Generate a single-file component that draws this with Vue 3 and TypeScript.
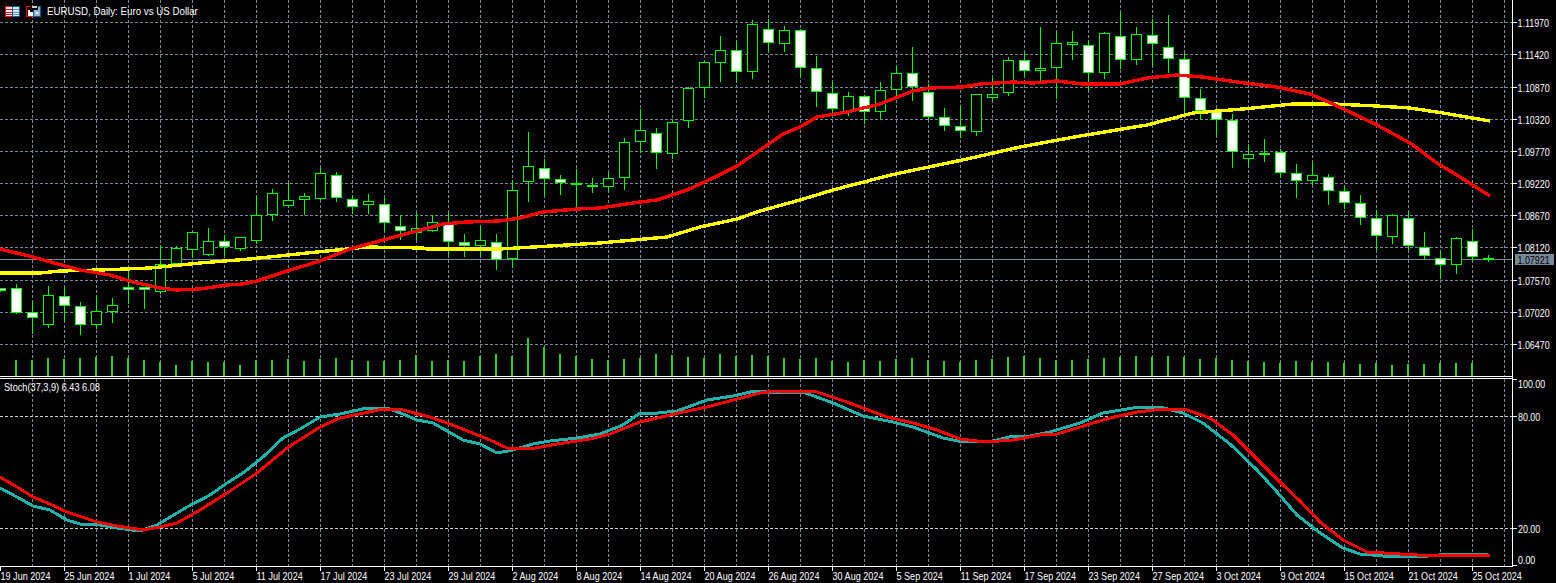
<script setup lang="ts">
type Pt = [number, number];
// high, body top, body bottom, low, bearish (white body)
const raw: [number, number, number, number, number][] = [
  [288,288,291,291,1],[284,288,313,313,1],[301,312,318,333,1],[286,295,325,327,0],[287,296,306,320,1],[302,306,325,334,1],
  [296,311,325,328,0],[298,305,312,322,0],[269,287,290,303,1],[287,287,290,308,1],[245,264,292,293,0],[246,248,264,264,0],
  [232,232,250,257,0],[228,241,255,255,0],[235,241,247,255,1],[237,237,249,250,0],[196,215,241,243,0],[189,193,215,220,0],
  [183,200,206,207,0],[193,196,200,214,0],[168,173,199,199,0],[172,175,198,201,1],[195,199,207,213,1],[194,201,205,213,0],
  [198,204,223,231,1],[215,226,231,239,1],[213,228,233,239,0],[215,222,231,231,0],[213,224,242,254,1],[234,242,246,256,1],
  [226,240,246,255,0],[234,242,260,269,1],[180,190,259,267,0],[132,166,182,201,0],[159,168,179,195,1],[175,179,183,194,1],
  [169,183,185,207,1],[178,185,187,192,1],[173,178,187,191,0],[138,142,178,189,0],[109,130,142,152,0],[128,133,153,168,1],
  [119,122,154,158,0],[87,88,121,127,0],[61,62,88,97,0],[36,50,63,81,0],[41,50,72,81,1],[20,24,72,78,0],
  [19,29,43,51,1],[26,30,44,51,0],[29,30,68,77,1],[56,68,92,106,1],[82,93,109,112,1],[92,96,112,115,0],
  [95,96,112,123,1],[82,90,112,118,0],[66,73,90,95,0],[47,73,87,100,1],[84,92,117,119,1],[108,117,126,130,1],
  [105,126,131,137,1],[94,94,132,135,0],[78,94,98,100,0],[57,60,93,95,0],[52,60,71,75,1],[27,68,71,82,0],
  [32,43,68,98,0],[31,42,45,59,0],[40,45,73,90,1],[32,33,73,78,0],[12,36,60,68,1],[27,34,60,64,0],
  [19,35,44,65,1],[15,47,59,72,1],[53,59,98,112,1],[89,98,111,119,1],[108,111,120,134,1],[114,120,152,167,1],
  [144,154,159,165,0],[139,153,154,161,0],[149,152,173,177,1],[164,173,181,197,1],[163,175,181,184,0],[174,177,191,204,1],
  [186,191,203,208,1],[195,203,218,224,1],[210,218,236,249,1],[214,215,237,243,0],[211,218,246,249,1],[232,247,256,259,1],
  [250,258,265,278,1],[237,238,265,273,0],[229,241,257,260,1],[255,258,259,261,0],
];
const candles = raw.map((c, i) => {
  const top = c[1] + 0.5;
  return { x: i * 16 + 0.5, hi: c[0], top, h: Math.max(1, c[2] - 0.5 - top), lo: c[3], white: c[4] === 1 };
});

const volTops = [
  0,360,360,358,359,358,357,356,358,360,362,365,361,362,362,365,360,360,359,361,359,358,360,361,
  361,360,355,361,360,361,356,354,356,338,347,354,356,359,360,359,358,354,355,357,358,354,356,355,
  356,358,359,358,361,362,360,361,359,358,360,361,362,360,359,357,356,358,360,360,359,358,357,356,
  357,356,357,359,358,360,361,362,363,361,362,362,363,364,363,365,364,364,363,363,363,0,
];
const volumes = volTops.map((t, i) => ({ x: i * 16 - 1, y: t })).filter((v) => v.y > 0);

const toPts = (a: Pt[]) => a.map((p) => p.join(",")).join(" ");

const maRed = toPts([[0,249],[33,257],[47,261],[80,270],[110,275],[133,282],[160,288],[177,290],[200,289],[227,285],[243,284],[257,281],[287,271],[320,261],[350,249],[383,240],[413,232],[443,224],[467,222],[500,221],[520,218],[543,212],[577,209],[600,208],[640,202],[657,200],[687,190],[713,178],[737,166],[763,148],[783,134],[800,127],[817,117],[847,112],[880,104],[913,91],[930,88],[963,87],[980,84],[1013,82],[1033,83],[1057,81],[1083,84],[1120,84],[1147,78],[1177,75],[1203,77],[1237,82],[1277,87],[1310,94],[1333,104],[1377,125],[1410,143],[1437,163],[1460,177],[1490,196]]);
const maYellow = toPts([[0,273],[40,273],[60,271],[100,270],[150,268],[200,263],[250,259],[317,252],[367,247],[423,248],[427,249],[483,249],[500,249],[550,246],[600,243],[667,237],[700,227],[737,219],[760,211],[800,200],[833,190],[883,177],[900,173],[967,159],[1020,147],[1080,136],[1147,125],[1193,113],[1243,109],[1293,104],[1333,104],[1377,106],[1410,108],[1443,113],[1490,121]]);
const stTeal = toPts([[0,488],[17,497],[33,506],[50,510],[67,520],[80,524],[100,525],[117,528],[140,531],[157,525],[187,507],[210,495],[227,483],[243,473],[263,457],[283,438],[300,429],[320,417],[340,414],[367,408],[387,408],[403,414],[417,420],[433,423],[463,440],[480,444],[497,453],[513,450],[533,444],[550,441],[577,438],[600,434],[623,425],[640,413],[648,414],[677,411],[707,400],[733,396],[755,391],[767,392],[803,392],[833,403],[863,416],[893,422],[913,427],[943,438],[963,442],[993,441],[1013,436],[1030,436],[1050,432],[1080,423],[1103,413],[1133,408],[1160,407],[1183,413],[1203,423],[1230,444],[1257,470],[1277,492],[1297,515],[1320,533],[1343,548],[1360,554],[1383,556],[1417,557],[1450,554],[1488,554]]);
const stRed = toPts([[0,477],[17,487],[33,497],[50,504],[67,512],[97,522],[117,526],[143,530],[160,527],[177,523],[200,510],[227,493],[257,473],[287,448],[320,427],[340,418],[383,409],[403,410],[430,417],[450,424],[490,440],[507,448],[530,449],[557,444],[590,439],[610,434],[640,422],[683,412],[707,407],[737,399],[760,393],[777,391],[817,392],[847,402],[887,417],[913,423],[937,430],[960,439],[985,442],[1013,440],[1040,435],[1057,434],[1090,424],[1110,418],[1137,412],[1163,409],[1187,410],[1210,418],[1233,435],[1263,465],[1283,485],[1300,501],[1320,522],[1343,540],[1367,552],[1400,554],[1433,556],[1467,555],[1490,555]]);

const vGrid = Array.from({ length: 47 }, (_, i) => (i + 1) * 32 + 0.5);
const prices: [string, number][] = [
  ["1.11970",22],["1.11420",54],["1.10870",87],["1.10320",119],["1.09770",151],["1.09220",183],
  ["1.08670",215],["1.08120",247],["1.07570",280],["1.07020",312],["1.06470",344],
];
const dates = ["19 Jun 2024","25 Jun 2024","1 Jul 2024","5 Jul 2024","11 Jul 2024","17 Jul 2024","23 Jul 2024","29 Jul 2024","2 Aug 2024","8 Aug 2024","14 Aug 2024","20 Aug 2024","26 Aug 2024","30 Aug 2024","5 Sep 2024","11 Sep 2024","17 Sep 2024","23 Sep 2024","27 Sep 2024","3 Oct 2024","9 Oct 2024","15 Oct 2024","21 Oct 2024","25 Oct 2024"];
const squeeze = (x: number, y: number, k = 0.81) => `translate(${x} ${y}) scale(${k} 1)`;
</script>

<template>
  <div class="terminal">
    <section class="row main-row">
      <svg class="plot" width="1512" height="376" viewBox="0 0 1512 376">
        <g class="grid">
          <line v-for="y in prices" :key="y[0]" x1="0" x2="1512" :y1="y[1] + 0.5" :y2="y[1] + 0.5" />
          <line v-for="x in vGrid" :key="x" :x1="x" :x2="x" y1="0" y2="376" />
        </g>
        <line class="last" x1="0" x2="1512" y1="259.5" y2="259.5" />
        <rect v-for="v in volumes" :key="v.x" class="vol" :x="v.x" :y="v.y" width="2" :height="376 - v.y" />
        <g v-for="c in candles" :key="c.x" class="candle">
          <line :x1="c.x" :x2="c.x" :y1="c.hi" :y2="c.lo + 1" />
          <rect :class="{ white: c.white }" :x="c.x - 5" :y="c.top" width="10" :height="c.h" />
        </g>
        <polyline class="line yellow" :points="maYellow" />
        <polyline class="line red" :points="maRed" />
        <g class="icons">
          <rect x="5.5" y="6.5" width="7" height="10" fill="#fff" stroke="#f00" />
          <rect x="12.5" y="6.5" width="7" height="10" fill="#dfe6ec" stroke="#0d5c9e" />
          <path d="M6 9.5h6M6 12.5h6M6 14.5h6" stroke="#f00" />
          <path d="M13 9.5h6M13 12.5h6M13 14.5h6" stroke="#6f8fa8" />
          <rect x="26.5" y="6.5" width="7" height="10" fill="#000" stroke="#f00" />
          <rect x="33.5" y="6.5" width="7" height="10" fill="#8fb2cc" stroke="#0d5c9e" />
          <rect x="28" y="10" width="2" height="6" fill="#fff" />
          <rect x="30" y="12" width="3" height="4" fill="#fff" />
          <rect x="31" y="6" width="7" height="4" fill="#000" />
          <rect x="32" y="6" width="5" height="2" fill="#c8d0d6" />
          <rect x="36" y="12" width="2" height="2" fill="#fff" />
        </g>
        <text class="label" :transform="squeeze(47, 15, 0.886)" xml:space="preserve">EURUSD, Daily:  Euro vs US Dollar</text>
      </svg>
      <svg class="axis" width="44" height="376" viewBox="1512 0 44 376">
        <g v-for="p in prices" :key="p[0]">
          <line class="tick" x1="1513" x2="1517" :y1="p[1] + 0.5" :y2="p[1] + 0.5" />
          <text class="label" :transform="squeeze(1517.5, p[1] + 4.5)">{{ p[0] }}</text>
        </g>
        <rect class="tag" x="1515" y="254" width="39" height="11" />
        <text class="label dark" :transform="squeeze(1517.5, 264)">1.07921</text>
      </svg>
    </section>

    <section class="row sep-row">
      <div class="sep"></div>
      <div class="sep-axis"></div>
    </section>

    <section class="row osc-row">
      <svg class="plot" width="1512" height="187" viewBox="0 379 1512 187">
        <g class="grid">
          <line v-for="x in vGrid" :key="x" :x1="x" :x2="x" y1="379" y2="566" />
        </g>
        <g class="grid level">
          <line x1="0" x2="1512" y1="416.5" y2="416.5" />
          <line x1="0" x2="1512" y1="528.5" y2="528.5" />
        </g>
        <polyline class="line teal" :points="stTeal" />
        <polyline class="line red thin" :points="stRed" />
        <text class="label" :transform="squeeze(4, 391, 0.835)">Stoch(37,3,9) 6.43 6.08</text>
      </svg>
      <svg class="axis open" width="44" height="187" viewBox="1512 379 44 187">
        <line class="tick" x1="1513" x2="1517" y1="379.5" y2="379.5" />
        <line class="tick" x1="1513" x2="1517" y1="416.5" y2="416.5" />
        <line class="tick" x1="1513" x2="1517" y1="528.5" y2="528.5" />
        <line class="tick" x1="1513" x2="1517" y1="565.5" y2="565.5" />
        <text class="label" :transform="squeeze(1518, 387.5)">100.00</text>
        <text class="label" :transform="squeeze(1518, 420.5)">80.00</text>
        <text class="label" :transform="squeeze(1518, 532.5)">20.00</text>
        <text class="label" :transform="squeeze(1518, 564)">0.00</text>
      </svg>
    </section>

    <svg class="time" width="1556" height="17" viewBox="0 566 1556 17">
      <line class="tick" x1="0" x2="1513" y1="566.5" y2="566.5" />
      <g v-for="(d, i) in dates" :key="d">
        <line class="tick" :x1="i * 64 + 0.5" :x2="i * 64 + 0.5" y1="567" y2="571" />
        <text class="label" :transform="squeeze(i * 64 + 0.5, 580, 0.825)">{{ d }}</text>
      </g>
    </svg>
  </div>
</template>

<style scoped>
.terminal {
  width: 1556px;
  height: 583px;
  background: #000;
  display: flex;
  flex-direction: column;
  overflow: hidden;
}
.row {
  display: flex;
  flex: none;
}
svg {
  display: block;
  flex: none;
}
.plot {
  background: #000;
}
.axis {
  box-shadow: inset 1px 0 0 #fff;
}
.axis.open {
  overflow: visible;
}
.sep-row {
  height: 3px;
}
.sep {
  width: 1512px;
  border-top: 1px solid #fff;
  border-bottom: 1px solid #fff;
  box-sizing: border-box;
}
.sep-axis {
  width: 44px;
  box-shadow: inset 1px 0 0 #fff;
}
.grid line {
  stroke: #778899;
  stroke-width: 1;
  stroke-dasharray: 3 2;
  shape-rendering: crispEdges;
}
.grid.level line {
  stroke: #c4ccd4;
}
.last {
  stroke: #778899;
  stroke-width: 1;
  shape-rendering: crispEdges;
}
.vol {
  fill: #32cd32;
  shape-rendering: crispEdges;
}
.candle line {
  stroke: #0f0;
  stroke-width: 1;
  shape-rendering: crispEdges;
}
.candle rect {
  fill: #000;
  stroke: #0f0;
  stroke-width: 1;
  shape-rendering: crispEdges;
}
.candle rect.white {
  fill: #fff;
}
.line {
  fill: none;
  stroke-width: 3.4;
  stroke-linejoin: round;
  shape-rendering: crispEdges;
}
.line.thin {
  stroke-width: 3;
}
.yellow {
  stroke: #ff0;
}
.red {
  stroke: #f00;
}
.teal {
  stroke: #20b2aa;
  stroke-width: 3;
}
.icons * {
  shape-rendering: crispEdges;
}
.tick {
  stroke: #fff;
  stroke-width: 1;
  shape-rendering: crispEdges;
}
.tag {
  fill: #778899;
}
.label {
  font-family: "Liberation Sans", Arial, sans-serif;
  font-size: 11px;
  fill: #fff;
  white-space: pre;
}
.label.dark {
  fill: #000;
}
</style>
